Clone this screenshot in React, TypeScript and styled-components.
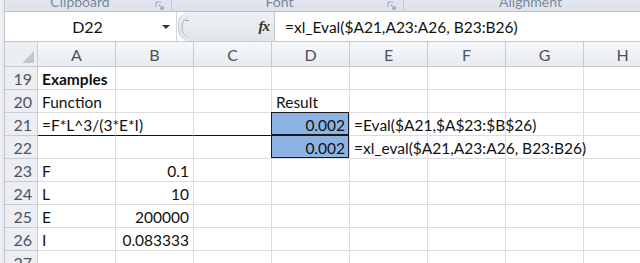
import React from 'react';
import styled, { createGlobalStyle, css } from 'styled-components';

const Global = createGlobalStyle`
  html, body { margin: 0; padding: 0; background: #fff; overflow: hidden; }
  body { font-family: Lato, "Open Sans", sans-serif; }
  #root { width: 640px; height: 263px; }
`;

const Window = styled.div`
  width: 640px;
  height: 263px;
  overflow: hidden;
  display: flex;
  background: #fff;
`;

const FrameEdge = styled.div`
  width: 5px;
  flex: none;
  background: linear-gradient(to right, #f1f3f5, #e4e8ec);
  border-right: 1px solid #c3c9d1;
  box-sizing: border-box;
`;

const Main = styled.div`
  flex: 1;
  min-width: 0;
  display: flex;
  flex-direction: column;
`;

const Ribbon = styled.div`
  height: 12px;
  flex: none;
  display: flex;
  background: linear-gradient(to bottom, #e2e7ee, #dce2ea);
  border-bottom: 1px solid #b7c0cb;
  box-sizing: border-box;
  overflow: hidden;
`;

const Group = styled.div<{ $w: number }>`
  width: ${p => p.$w}px;
  flex: none;
  display: flex;
  align-items: flex-start;
  border-right: 1px solid #c2cad4;
  box-sizing: border-box;
`;

const GroupLabel = styled.div`
  flex: 1;
  text-align: center;
  font-size: 14px;
  line-height: 14px;
  margin-top: -5px;
  color: #7d8897;
`;

const Launcher = styled.svg`
  width: 10px;
  height: 10px;
  flex: none;
  margin: 1px 6px 0 0;
`;

const FormulaBar = styled.div`
  height: 30px;
  flex: none;
  display: flex;
  align-items: stretch;
  border-bottom: 1px solid #c3c9d1;
  box-sizing: border-box;
  background: #fff;
`;

const NameBox = styled.div`
  width: 172px;
  flex: none;
  display: flex;
  align-items: center;
  border-right: 1px solid #d4d9df;
  box-sizing: border-box;
`;

const NameText = styled.div`
  flex: 1;
  text-align: center;
  font-size: 16px;
  color: #111;
  padding-left: 8px;
`;

const DropArrow = styled.div`
  width: 0;
  height: 0;
  border-left: 4px solid transparent;
  border-right: 4px solid transparent;
  border-top: 4px solid #333;
  margin-right: 6px;
`;

const Toolbox = styled.div`
  width: 97px;
  flex: none;
  display: flex;
  align-items: center;
  justify-content: space-between;
  background: linear-gradient(to bottom, #eef1f4, #e1e5ea);
  border-left: 1px solid #c3c9d1;
  border-right: 1px solid #c3c9d1;
  border-radius: 12px 0 0 12px;
  box-sizing: border-box;
  margin-left: 1px;
`;

const Grip = styled.div`
  width: 10px;
  height: 22px;
  margin-left: 2px;
  border-left: 2px solid #c9ced5;
  border-radius: 11px 0 0 11px;
  display: flex;
  align-items: flex-start;
  justify-content: center;
  padding-top: 4px;
  box-sizing: border-box;
`;

const GripMark = styled.div`
  width: 4px;
  height: 1px;
  background: #9aa3ae;
`;

const Fx = styled.div`
  font-family: "Liberation Serif", serif;
  font-style: italic;
  font-weight: bold;
  font-size: 15px;
  color: #333;
  margin-right: 5px;
  letter-spacing: -1px;
`;

const FormulaText = styled.div`
  flex: 1;
  display: flex;
  align-items: center;
  padding-left: 10px;
  font-size: 15.5px;
  color: #111;
  white-space: nowrap;
`;

const Grid = styled.div`
  display: grid;
  grid-template-columns: 33px repeat(8, 78px);
  grid-auto-rows: 23px;
  grid-template-rows: 25px;
`;

const HeaderBase = css`
  box-sizing: border-box;
  border-right: 1px solid #c6ccd4;
  border-bottom: 1px solid #c6ccd4;
  color: #4b5361;
  font-size: 16px;
  display: flex;
  align-items: center;
`;

const Corner = styled.div`
  ${HeaderBase};
  background: #eceef1;
  justify-content: flex-end;
  align-items: flex-end;
  padding: 0 3px 3px 0;
`;

const ColHead = styled.div`
  ${HeaderBase};
  background: linear-gradient(to bottom, #f7f8fa, #e8ebef);
  justify-content: center;
`;

const RowHead = styled.div`
  ${HeaderBase};
  background: #eceef1;
  justify-content: flex-end;
  padding-right: 5px;
  padding-top: 1px;
`;

const Cell = styled.div<{ $align?: 'left' | 'right'; $bold?: boolean; $bottom?: boolean; $fill?: boolean }>`
  box-sizing: border-box;
  position: relative;
  border-right: 1px solid #dcdcdc;
  border-bottom: 1px solid ${p => (p.$bottom ? '#111' : '#dcdcdc')};
  font-size: 15.5px;
  color: #111;
  display: flex;
  align-items: center;
  padding: 1px 4px 0 4px;
  white-space: nowrap;
  overflow: visible;
  justify-content: ${p => (p.$align === 'right' ? 'flex-end' : 'flex-start')};
  font-weight: ${p => (p.$bold ? 700 : 400)};
  ${p =>
    p.$fill &&
    css`
      background: #8db3e2;
      z-index: 1;
      &::after {
        content: '';
        position: absolute;
        inset: -1px 0 0 -1px;
        border: 1px solid #1a1a1a;
        pointer-events: none;
      }
    `}
`;

const Overflow = styled.span`
  position: relative;
  z-index: 2;
`;

type CellDef = { text?: string; align?: 'left' | 'right'; bold?: boolean; bottom?: boolean; fill?: boolean };

const cols = ['A', 'B', 'C', 'D', 'E', 'F', 'G', 'H'];

const rows: { n: number; cells: Record<string, CellDef> }[] = [
  { n: 19, cells: { A: { text: 'Examples', bold: true } } },
  { n: 20, cells: { A: { text: 'Function' }, D: { text: 'Result' } } },
  {
    n: 21,
    cells: {
      A: { text: '=F*L^3/(3*E*I)', bottom: true },
      B: { bottom: true },
      C: { bottom: true },
      D: { text: '0.002', align: 'right', fill: true },
      E: { text: '=Eval($A21,$A$23:$B$26)' },
    },
  },
  {
    n: 22,
    cells: {
      D: { text: '0.002', align: 'right', fill: true },
      E: { text: '=xl_eval($A21,A23:A26, B23:B26)' },
    },
  },
  { n: 23, cells: { A: { text: 'F' }, B: { text: '0.1', align: 'right' } } },
  { n: 24, cells: { A: { text: 'L' }, B: { text: '10', align: 'right' } } },
  { n: 25, cells: { A: { text: 'E' }, B: { text: '200000', align: 'right' } } },
  { n: 26, cells: { A: { text: 'I' }, B: { text: '0.083333', align: 'right' } } },
  { n: 27, cells: {} },
];

const LauncherIcon = () => (
  <Launcher viewBox="0 0 10 10">
    <path d="M1 1 H6 M1 1 V6" stroke="#9aa4b1" strokeWidth="1" fill="none" />
    <path d="M4 4 L8 8 M8 5 V8 H5" stroke="#7f8a98" strokeWidth="1" fill="none" />
  </Launcher>
);

export default function App() {
  return (
    <>
      <Global />
      <Window>
        <FrameEdge />
        <Main>
          <Ribbon>
            <Group $w={167}>
              <GroupLabel>Clipboard</GroupLabel>
              <LauncherIcon />
            </Group>
            <Group $w={232}>
              <GroupLabel>Font</GroupLabel>
              <LauncherIcon />
            </Group>
            <Group $w={270}>
              <GroupLabel>Alignment</GroupLabel>
              <LauncherIcon />
            </Group>
          </Ribbon>
          <FormulaBar>
            <NameBox>
              <NameText>D22</NameText>
              <DropArrow />
            </NameBox>
            <Toolbox>
              <Grip>
                <GripMark />
              </Grip>
              <Fx>fx</Fx>
            </Toolbox>
            <FormulaText>=xl_Eval($A21,A23:A26, B23:B26)</FormulaText>
          </FormulaBar>
          <Grid>
            <Corner>
              <svg width="12" height="12" viewBox="0 0 12 12">
                <path d="M12 0 L12 12 L0 12 Z" fill="#c3c8cf" />
              </svg>
            </Corner>
            {cols.map(c => (
              <ColHead key={c}>{c}</ColHead>
            ))}
            {rows.map(r => (
              <React.Fragment key={r.n}>
                <RowHead>{r.n}</RowHead>
                {cols.map(c => {
                  const d = r.cells[c] || {};
                  return (
                    <Cell key={c} $align={d.align} $bold={d.bold} $bottom={d.bottom} $fill={d.fill}>
                      {d.text && <Overflow>{d.text}</Overflow>}
                    </Cell>
                  );
                })}
              </React.Fragment>
            ))}
          </Grid>
        </Main>
      </Window>
    </>
  );
}
